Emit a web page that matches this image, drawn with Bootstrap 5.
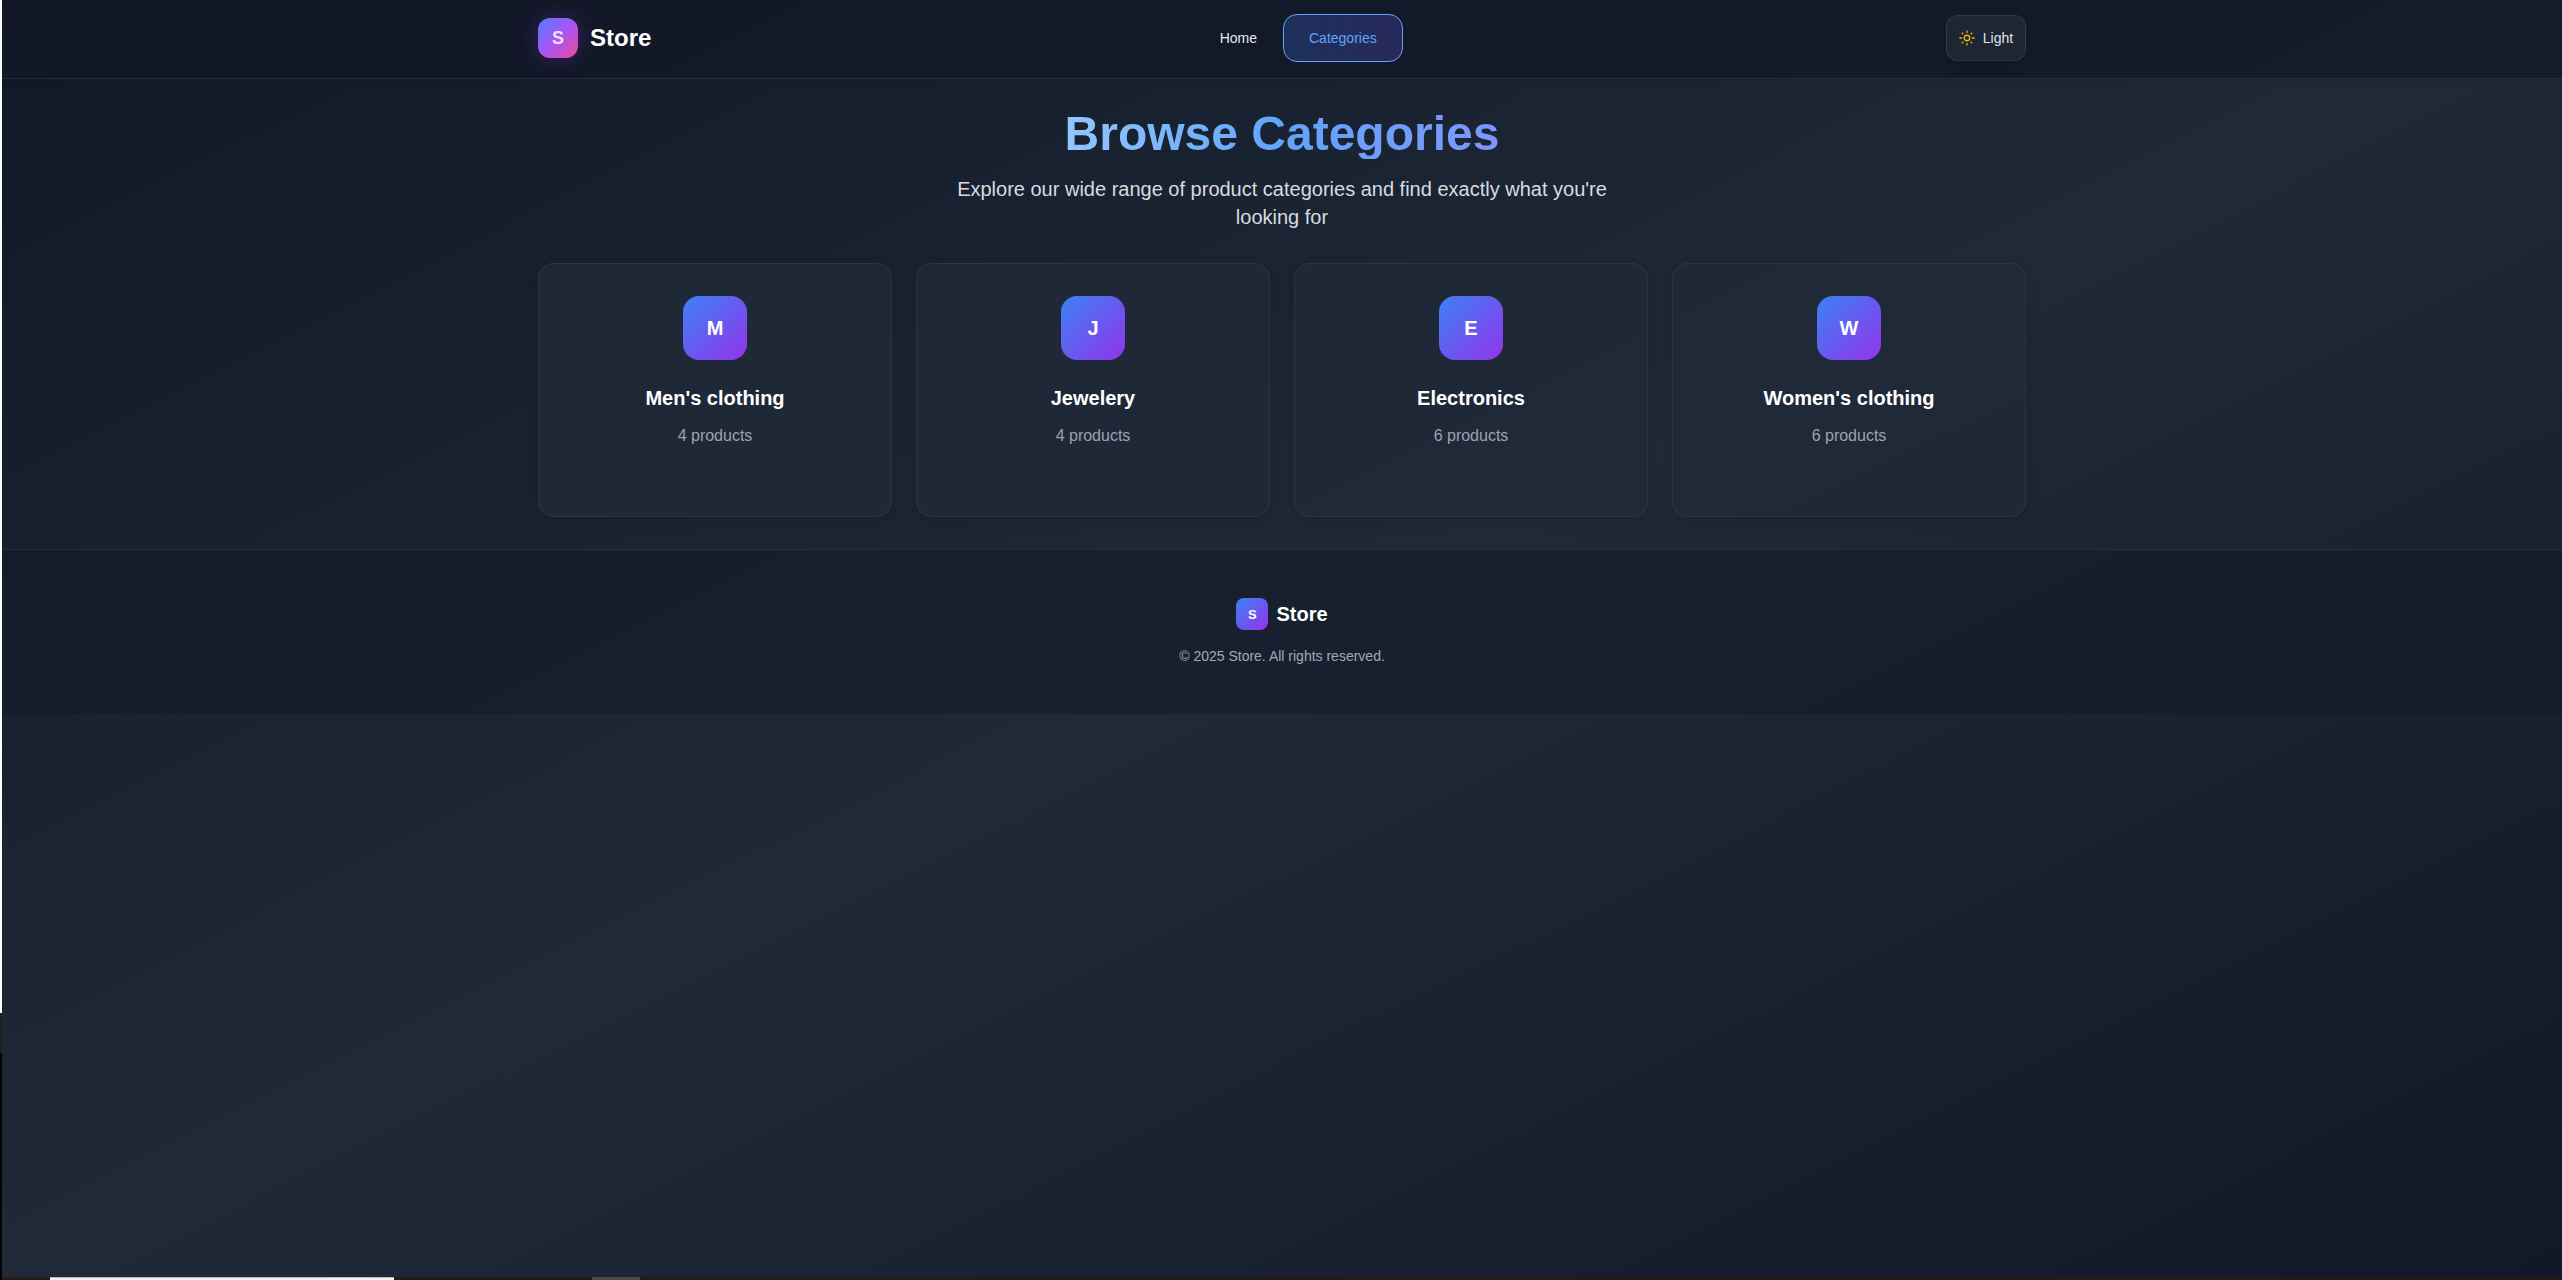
<!DOCTYPE html>
<html lang="en" data-bs-theme="dark">
<head>
<meta charset="utf-8">
<title>Store - Categories</title>
<link href="https://cdn.jsdelivr.net/npm/bootstrap@5.3.0/dist/css/bootstrap.min.css" rel="stylesheet">
<style>
body{font-family:"Liberation Sans",Arial,sans-serif;background:#000;height:100vh;overflow:hidden;color:#fff}
.edge-strip{width:2px;background:linear-gradient(#fff 1013px,#1f1f1f 1013px,#1f1f1f 1053px,#000 1053px)}
.page-bg{background:linear-gradient(to bottom right,#111827,#1f2937,#111827)}
.site-wrap{width:1488px;margin:0 auto}
.site-main{padding:32px 0}
.site-header{background:rgba(17,24,39,.8);border-bottom:1px solid rgba(55,65,81,.5);height:79px;padding:14px 0 16px;box-shadow:0 4px 6px rgba(0,0,0,.05)}
.brand-box{gap:12px}
.tile{background:linear-gradient(to bottom right,#3b82f6,#9333ea);font-weight:700;line-height:1}
.tile-brand{width:40px;height:40px;border-radius:12px;font-size:18px;color:rgba(255,255,255,.82);background:linear-gradient(to bottom right,#4f7ffa,#a855f7,#ec4899);box-shadow:0 0 20px rgba(147,51,234,.3)}
.brand-name{font-size:24px;line-height:32px}
.menu-link{font-size:14px;line-height:20px;padding:13px 25px;border:1px solid transparent;border-radius:14px;color:#e5e7eb}
.menu-link.active{color:#60a5fa;border-color:#60a5fa;background:linear-gradient(to right,#1d305c,#28295a)}
.menu-bar{margin-right:1px}
.theme-btn{width:80px;height:46px;border:1px solid rgba(75,85,99,.4);border-radius:12px;background:#1d2733;color:#e0e3e8;font-size:14px;box-shadow:0 4px 12px rgba(0,0,0,.15)}
.page-title{font-size:48px;line-height:46px;padding-bottom:2px;background:linear-gradient(to right,#93c5fd,#60a5fa 50%,#7f95fb);-webkit-background-clip:text;background-clip:text;color:transparent}
.page-sub{max-width:672px;font-size:20px;line-height:28px;color:#d8dbe0}
.cat-grid{display:grid;grid-template-columns:repeat(4,1fr);gap:24px}
.cat-card{height:254px;padding:32px;border:1px solid rgba(75,85,99,.3);border-radius:16px;background:rgba(32,41,55,.85);box-shadow:0 4px 12px rgba(0,0,0,.12)}
.tile-cat{width:64px;height:64px;border-radius:16px;font-size:20px}
.cat-name{font-size:20px;line-height:28px;margin:24px 0 12px}
.cat-count{font-size:16px;line-height:24px;color:#9ca3af}
.site-footer{background:rgba(17,24,39,.5);border-top:1px solid rgba(55,65,81,.5);padding:48px 0;height:165px}
.tile-foot{width:32px;height:32px;border-radius:8px;font-size:13px}
.foot-name{font-size:20px;line-height:28px}
.foot-copy{font-size:14px;line-height:20px;color:#a3a9b4}
.task-edge{height:3px;background:#211c1b}
.task-light{width:344px;margin-left:48px;background:#f3f1ef;border-top:1px solid #b8bcc1}
.task-grey{width:48px;margin-left:198px;background:#4a4847}
</style>
<script src="https://cdn.jsdelivr.net/npm/bootstrap@5.3.0/dist/js/bootstrap.bundle.min.js"></script>
</head>
<body class="d-flex">
<div class="edge-strip flex-shrink-0"></div>
<div class="flex-grow-1 d-flex flex-column">
<div class="page-bg flex-grow-1">
  <header class="site-header">
    <div class="site-wrap d-flex align-items-center justify-content-between">
      <div class="brand-box d-flex align-items-center">
        <span class="tile tile-brand d-flex align-items-center justify-content-center">S</span>
        <span class="brand-name fw-bold">Store</span>
      </div>
      <nav class="menu-bar d-flex">
        <a class="menu-link text-decoration-none" href="#">Home</a>
        <a class="menu-link active text-decoration-none" href="#">Categories</a>
      </nav>
      <button class="theme-btn d-flex align-items-center justify-content-center p-0 gap-2" type="button">
        <svg width="16" height="16" viewBox="0 0 24 24" fill="none" stroke="#eab308" stroke-width="2"><circle cx="12" cy="12" r="4.1"/><path d="M12 4.6V.6M12 23.4v-4M4.6 12h-4M23.4 12h-4M6.4 6.4 4.2 4.2M19.8 19.8l-2.2-2.2M6.4 17.6l-2.2 2.2M19.8 4.2l-2.2 2.2"/></svg>
        <span>Light</span>
      </button>
    </div>
  </header>
  <main class="site-wrap site-main">
    <div class="text-center">
      <h1 class="page-title fw-bold d-table mx-auto mb-3">Browse Categories</h1>
      <p class="page-sub mx-auto mb-0">Explore our wide range of product categories and find exactly what you're looking for</p>
    </div>
    <div class="cat-grid text-center pt-3 mt-3">
      <div class="cat-card"><div class="tile tile-cat d-flex align-items-center justify-content-center mx-auto">M</div><h3 class="cat-name fw-bold">Men's clothing</h3><p class="cat-count mb-0">4 products</p></div>
      <div class="cat-card"><div class="tile tile-cat d-flex align-items-center justify-content-center mx-auto">J</div><h3 class="cat-name fw-bold">Jewelery</h3><p class="cat-count mb-0">4 products</p></div>
      <div class="cat-card"><div class="tile tile-cat d-flex align-items-center justify-content-center mx-auto">E</div><h3 class="cat-name fw-bold">Electronics</h3><p class="cat-count mb-0">6 products</p></div>
      <div class="cat-card"><div class="tile tile-cat d-flex align-items-center justify-content-center mx-auto">W</div><h3 class="cat-name fw-bold">Women's clothing</h3><p class="cat-count mb-0">6 products</p></div>
    </div>
  </main>
  <footer class="site-footer text-center">
    <div class="d-flex align-items-center justify-content-center gap-2 mb-3">
      <span class="tile tile-foot d-flex align-items-center justify-content-center">S</span>
      <span class="foot-name fw-bold">Store</span>
    </div>
    <p class="foot-copy mb-0">© 2025 Store. All rights reserved.</p>
  </footer>
</div>
<div class="task-edge d-flex flex-shrink-0"><div class="task-light"></div><div class="task-grey"></div></div>
</div>
</body>
</html>
